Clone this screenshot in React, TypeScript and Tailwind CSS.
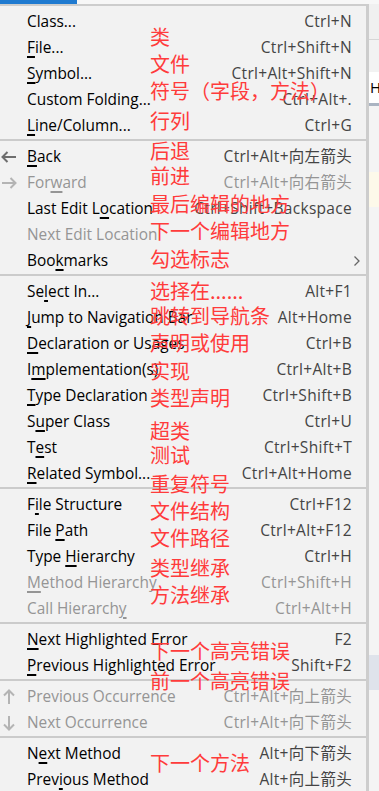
import React from "react";

type Item = {
  label: string;
  u?: number;
  key?: string;
  disabled?: boolean;
  icon?: "left" | "right" | "up" | "down";
  sub?: boolean;
};

const groups: Item[][] = [
  [
    { label: "Class...", key: "Ctrl+N" },
    { label: "File...", u: 0, key: "Ctrl+Shift+N" },
    { label: "Symbol...", u: 0, key: "Ctrl+Alt+Shift+N" },
    { label: "Custom Folding...", key: "Ctrl+Alt+." },
    { label: "Line/Column...", u: 0, key: "Ctrl+G" },
  ],
  [
    { label: "Back", u: 0, key: "Ctrl+Alt+向左箭头", icon: "left" },
    { label: "Forward", u: 3, key: "Ctrl+Alt+向右箭头", icon: "right", disabled: true },
    { label: "Last Edit Location", u: 11, key: "Ctrl+Shift+Backspace" },
    { label: "Next Edit Location", disabled: true },
    { label: "Bookmarks", u: 3, sub: true },
  ],
  [
    { label: "Select In...", u: 2, key: "Alt+F1" },
    { label: "Jump to Navigation Bar", u: 0, key: "Alt+Home" },
    { label: "Declaration or Usages", u: 0, key: "Ctrl+B" },
    { label: "Implementation(s)", u: 1, key: "Ctrl+Alt+B" },
    { label: "Type Declaration", u: 0, key: "Ctrl+Shift+B" },
    { label: "Super Class", u: 1, key: "Ctrl+U" },
    { label: "Test", u: 1, key: "Ctrl+Shift+T" },
    { label: "Related Symbol...", u: 0, key: "Ctrl+Alt+Home" },
  ],
  [
    { label: "File Structure", u: 1, key: "Ctrl+F12" },
    { label: "File Path", u: 5, key: "Ctrl+Alt+F12" },
    { label: "Type Hierarchy", u: 5, key: "Ctrl+H" },
    { label: "Method Hierarchy", u: 0, key: "Ctrl+Shift+H", disabled: true },
    { label: "Call Hierarchy", u: 13, key: "Ctrl+Alt+H", disabled: true },
  ],
  [
    { label: "Next Highlighted Error", u: 0, key: "F2" },
    { label: "Previous Highlighted Error", u: 0, key: "Shift+F2" },
  ],
  [
    { label: "Previous Occurrence", key: "Ctrl+Alt+向上箭头", icon: "up", disabled: true },
    { label: "Next Occurrence", key: "Ctrl+Alt+向下箭头", icon: "down", disabled: true },
  ],
  [
    { label: "Next Method", u: 1, key: "Alt+向下箭头" },
    { label: "Previous Method", u: 4, key: "Alt+向上箭头" },
  ],
];

// red hand-written notes laid over the menu: [text, top]
const notes: [string, number][] = [
  ["类", 27],
  ["文件", 54],
  ["符号（字段，方法）", 81],
  ["行列", 111],
  ["后退", 141],
  ["前进", 166],
  ["最后编辑的地方", 194],
  ["下一个编辑地方", 221],
  ["勾选标志", 249],
  ["选择在......", 281],
  ["跳转到导航条", 306],
  ["声明或使用", 333],
  ["实现", 361],
  ["类型声明", 388],
  ["超类", 421],
  ["测试", 445],
  ["重复符号", 474],
  ["文件结构", 501],
  ["文件路径", 528],
  ["类型继承", 558],
  ["方法继承", 585],
  ["下一个高亮错误", 641],
  ["前一个高亮错误", 671],
  ["下一个方法", 753],
];

function Arrow({ dir, color }: { dir: "left" | "right" | "up" | "down"; color: string }) {
  const rot = { left: 0, right: 180, up: 90, down: 270 }[dir];
  return (
    <svg width="16" height="16" viewBox="0 0 16 16" style={{ transform: `rotate(${rot}deg)` }}>
      <path d="M1.5 8H15M6.5 3L1.5 8L6.5 13" fill="none" stroke={color} strokeWidth="2" />
    </svg>
  );
}

function Label({ text, u }: { text: string; u?: number }) {
  if (u === undefined) return <span>{text}</span>;
  return (
    <span>
      {text.slice(0, u)}
      <span className="underline decoration-[1.5px] underline-offset-[3px]">{text[u]}</span>
      {text.slice(u + 1)}
    </span>
  );
}

function Row({ item }: { item: Item }) {
  return (
    <div className="h-[26px] pt-[3px] flex items-center relative">
      <div className="w-[27px] flex pl-[1px] shrink-0">
        {item.icon && (
          <Arrow dir={item.icon} color={item.disabled ? "#b4b4b4" : "#6e6e6e"} />
        )}
      </div>
      <div
        className={`flex-1 whitespace-nowrap text-[15.4px] ${item.disabled ? "text-[#959595]" : "text-black"}`}
      >
        <Label text={item.label} u={item.u} />
      </div>
      {item.key && (
        <div
          className={`whitespace-nowrap pr-[14px] text-[15.5px] tracking-[0.3px] ${item.disabled ? "text-[#959595]" : "text-[#444]"}`}
        >
          {item.key}
        </div>
      )}
      {item.sub && (
        <div className="pr-[5px]">
          <svg width="8" height="12" viewBox="0 0 8 12">
            <path d="M1.5 1.5L6 6L1.5 10.5" fill="none" stroke="#666" strokeWidth="1.3" />
          </svg>
        </div>
      )}
    </div>
  );
}

export default function App() {
  return (
    <div className="relative w-[379px] h-[791px] overflow-hidden bg-[#f0f0f0] font-['Open_Sans','Noto_Sans_CJK_SC',sans-serif] text-[15px]">
      <div className="flex h-[4px] bg-[#f7f7f7]">
        <div className="w-[77px] bg-[#1f7ad0]" />
      </div>
      <div className="flex">
        <div className="w-[369px] shrink-0 bg-[#f2f2f2] border-t-2 border-r-[3px] border-b-2 border-[#cdcdcd] pt-px">
          {groups.map((g, i) => (
            <div key={i}>
              {i > 0 && (
                <div className="h-[5px] flex items-center">
                  <div className="h-[2px] w-full bg-[#cbcbcb]" />
                </div>
              )}
              {g.map((item) => (
                <Row key={item.label} item={item} />
              ))}
            </div>
          ))}
        </div>
        {/* strip of the editor showing behind the popup */}
        <div className="flex-1 flex flex-col">
          <div className="h-[36px] border-b border-[#d6d6d6] bg-[#f0f0f0]" />
          <div className="h-[32px] bg-[#f2f2f2]" />
          <div className="h-[31px] bg-white text-black text-[15px] leading-[31px] pl-px">H</div>
          <div className="h-[3px] bg-[#aab4c2]" />
          <div className="h-[66px] bg-[#f4f4f4]" />
          <div className="h-[35px] bg-[#fdf9ea]" />
          <div className="h-[448px] bg-[#f4f4f4]" />
          <div className="h-[35px] bg-[#dfe3eb]" />
          <div className="flex-1 bg-[#f4f4f4]" />
        </div>
      </div>
      {notes.map(([t, top]) => (
        <span
          key={t + top}
          className="absolute left-[150px] text-[20px] leading-[20px] text-[#ff3b3b] whitespace-nowrap font-['Noto_Sans_CJK_SC',sans-serif]"
          style={{ top }}
        >
          {t}
        </span>
      ))}
    </div>
  );
}
